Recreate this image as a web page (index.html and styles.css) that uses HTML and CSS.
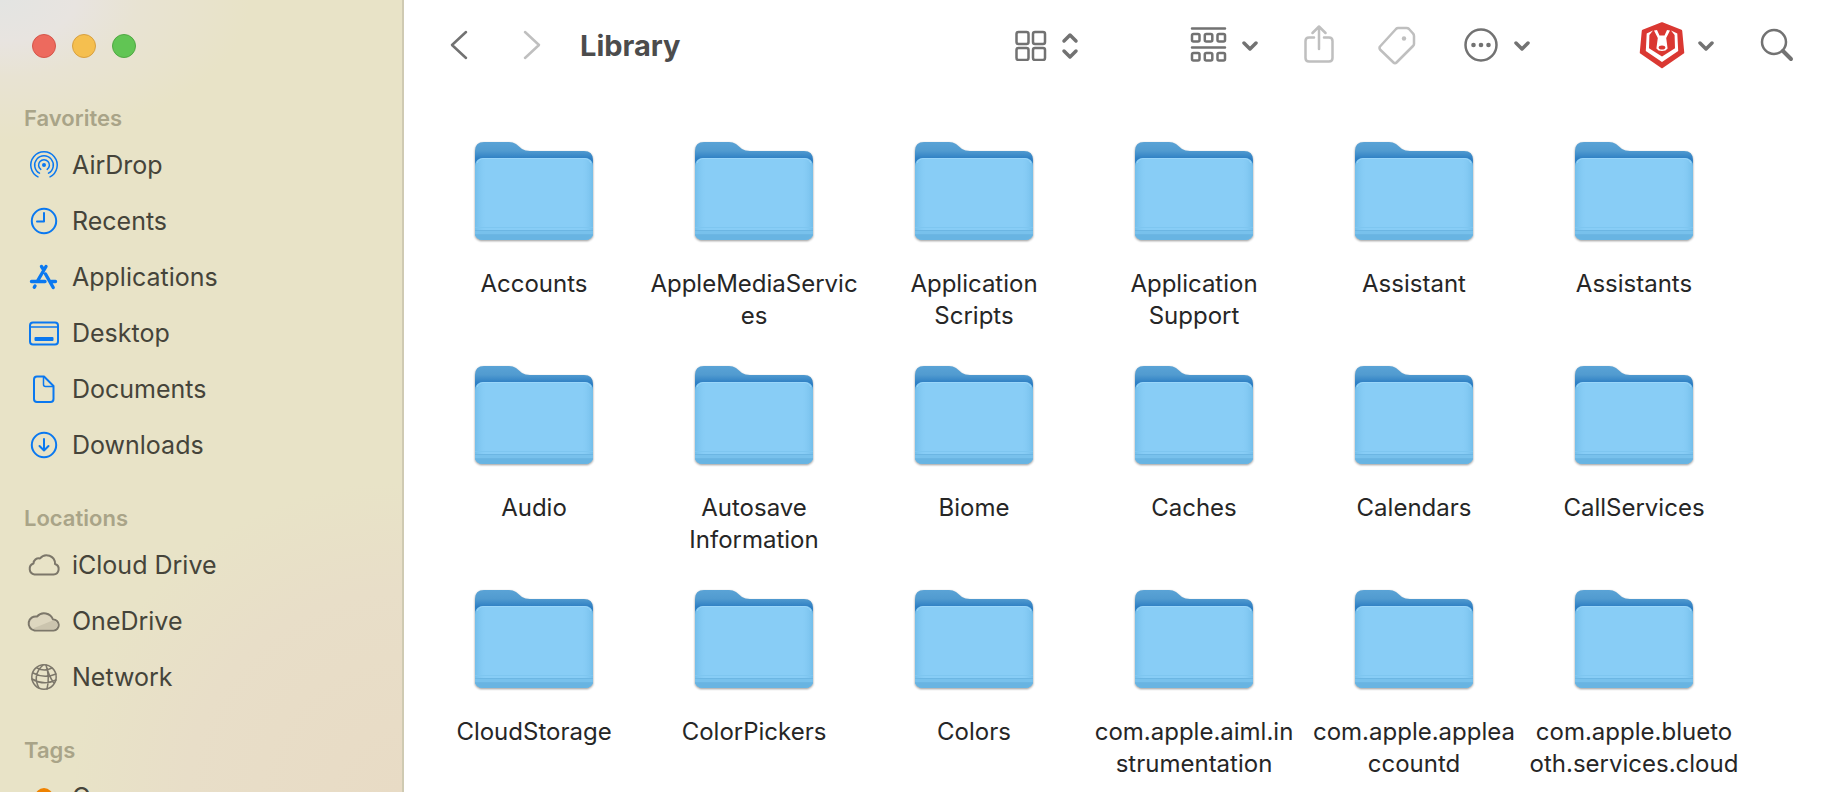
FILE: index.html
```html
<!DOCTYPE html>
<html lang="en">
<head>
    <meta charset="UTF-8">
    <meta name="viewport" content="width=device-width, initial-scale=1.0">
    <title>Library</title>
    <link rel="stylesheet" href="styles.css">
</head>
<body>
    <svg class="defs" width="0" height="0" aria-hidden="true">
        <defs>
            <linearGradient id="back" x1="0" y1="0" x2="0" y2="1">
                <stop offset="0" stop-color="#5aa3d6"/>
                <stop offset="0.09" stop-color="#519bd0"/>
                <stop offset="0.17" stop-color="#2e7fc4"/>
                <stop offset="1" stop-color="#2e7fc4"/>
            </linearGradient>
            <linearGradient id="side" x1="0" y1="0" x2="1" y2="0">
                <stop offset="0" stop-color="#6db9e6" stop-opacity="0.75"/>
                <stop offset="0.1" stop-color="#88cdf6" stop-opacity="0"/>
                <stop offset="0.9" stop-color="#88cdf6" stop-opacity="0"/>
                <stop offset="1" stop-color="#6db9e6" stop-opacity="0.75"/>
            </linearGradient>
            <symbol id="folder" viewBox="0 0 122 104">
                <path d="M2 91V11Q2 2 11 2H36Q40 2 43 4L49 9Q52 11 57 11H111Q120 11 120 20V91Q120 100 111 100H11Q2 100 2 91Z" fill="url(#back)"/>
                <path d="M2 92V27Q2 18 11 18H111Q120 18 120 27V92Q120 100 111 100H11Q2 100 2 92Z" fill="#88cdf6"/>
                <path d="M2 92V27Q2 18 11 18H111Q120 18 120 27V92Q120 100 111 100H11Q2 100 2 92Z" fill="url(#side)"/>
                <path d="M4 23Q6 18.500 11 18.500H111Q116 18.500 118 23" fill="none" stroke="#9ad6fa"/>
                <path d="M2 90H120V92Q120 100 111 100H11Q2 100 2 92Z" fill="#78c1ec"/>
                <path d="M2 95H120Q118 100 111 100H11Q4 100 2 95Z" fill="#68b4e2"/>
                <path d="M2 90.500H120M2 94.500H120" stroke="#6cb6e3" stroke-width="1"/>
                <path d="M2 87.500H120" stroke="#7ec6f0" stroke-width="1"/>
            </symbol>
        </defs>
    </svg>

    <aside class="sidebar">
        <div class="lights">
            <button class="light red" aria-label="Close"></button>
            <button class="light yellow" aria-label="Minimize"></button>
            <button class="light green" aria-label="Zoom"></button>
        </div>
        <nav>
            <h2>Favorites</h2>
            <a href="#">
                <svg class="blue airdrop" viewBox="0 0 32 32">
                    <circle cx="16" cy="16" r="2" fill="currentColor" stroke="none"/>
                    <path d="M12.800 20.400A5.400 5.400 0 1 1 19.200 20.400M11.500 24.200A9.300 9.300 0 1 1 20.500 24.200M10 27.800A13.200 13.200 0 1 1 22 27.800"/>
                </svg>
                AirDrop
            </a>
            <a href="#">
                <svg class="blue" viewBox="0 0 32 32"><circle cx="16" cy="16" r="12.200"/><path d="M16 8V16.500H9"/></svg>
                Recents
            </a>
            <a href="#">
                <svg class="blue apps" viewBox="0 0 32 32">
                    <path d="M18 5.500L9.500 20M13.500 5.500L15.500 8.500M3.500 20.500H17M23.500 20.500H27.500M17.500 13L25.200 26.500M7 25L6.300 26.300"/>
                </svg>
                Applications
            </a>
            <a href="#">
                <svg class="blue" viewBox="0 0 32 32"><rect x="2" y="5.500" width="28" height="22" rx="3"/><path d="M2 10H30" stroke-width="1.500"/><rect x="6.500" y="20" width="19" height="4" rx="1" fill="currentColor" stroke="none"/></svg>
                Desktop
            </a>
            <a href="#">
                <svg class="blue" viewBox="0 0 32 32"><path d="M9 3.500H16L25.500 13V26Q25.500 29 22.500 29H9Q6 29 6 26V6.500Q6 3.500 9 3.500Z"/><path d="M15.500 4V11.500Q15.500 13.500 17.500 13.500H25" stroke-width="1.500"/></svg>
                Documents
            </a>
            <a href="#">
                <svg class="blue" viewBox="0 0 32 32"><circle cx="16" cy="16" r="12.200"/><path d="M16 10V21.500M11.500 17L16 21.500L20.500 17"/></svg>
                Downloads
            </a>

            <h2>Locations</h2>
            <a href="#">
                <svg viewBox="0 0 32 32"><path d="M6.500 25.500H25.500A5.400 5.400 0 0 0 27 15A8.400 8.400 0 0 0 12 9.500A5.200 5.200 0 0 0 5.500 14.500A5.700 5.700 0 0 0 6.500 25.500Z"/></svg>
                iCloud Drive
            </a>
            <a href="#">
                <svg viewBox="0 0 32 32"><path d="M6.500 25.500H25.500A5.500 5.500 0 0 0 25 14.500A9.500 9.500 0 0 0 9 11.500A7 7 0 0 0 6.500 25.500Z" fill="#ddd6bf"/><path d="M5 23.500L24.500 15.500Q29.500 16 29.500 20.500Q28.500 24.500 25.500 24.500H8Z" fill="#cbc4ae" stroke="none"/></svg>
                OneDrive
            </a>
            <a href="#">
                <svg class="net" viewBox="0 0 32 32"><circle cx="16" cy="16" r="12.200"/><path d="M18 4Q22 16 19 28M15 4Q4 14 11 27M18 4Q21 16 26 22M5 12Q16 18 28 13M4 18Q16 25 28 19M9 7Q16 11 24 7"/></svg>
                Network
            </a>

            <h2>Tags</h2>
            <a href="#">
                <svg viewBox="0 0 32 32"><circle cx="16" cy="16" r="9" fill="#ef8200" stroke="none"/></svg>
                Orange
            </a>
        </nav>
    </aside>

    <main class="content">
        <header class="toolbar">
            <button class="back" aria-label="Back"><svg width="20" height="32" viewBox="0 0 20 32"><path d="M17 3L3 16L17 29"/></svg></button>
            <button class="forward dim" aria-label="Forward"><svg width="20" height="32" viewBox="0 0 20 32"><path d="M3 3L17 16L3 29"/></svg></button>
            <h1>Library</h1>
            <button class="view" aria-label="View as icons">
                <svg width="32" height="32" viewBox="0 0 32 32"><rect x="1.500" y="3" width="12" height="12" rx="2"/><rect x="18" y="3" width="12" height="12" rx="2"/><rect x="1.500" y="19" width="12" height="12" rx="2"/><rect x="18" y="19" width="12" height="12" rx="2"/></svg>
                <svg class="thick" width="18" height="32" viewBox="0 0 18 32"><path d="M3 12L9 6L15 12M3 22L9 28L15 22"/></svg>
            </button>
            <button class="group" aria-label="Group">
                <svg width="38" height="38" viewBox="0 0 38 38"><path d="M2 2.500H35M2 21.500H35"/><rect x="2" y="8" width="7.500" height="7.500" rx="1.500"/><rect x="14.800" y="8" width="7.500" height="7.500" rx="1.500"/><rect x="27.500" y="8" width="7.500" height="7.500" rx="1.500"/><rect x="2" y="27" width="7.500" height="7.500" rx="1.500"/><rect x="14.800" y="27" width="7.500" height="7.500" rx="1.500"/><rect x="27.500" y="27" width="7.500" height="7.500" rx="1.500"/></svg>
                <svg class="thick" width="18" height="12" viewBox="0 0 18 12"><path d="M3 4L9 10L15 4"/></svg>
            </button>
            <button class="share dim" aria-label="Share">
                <svg width="32" height="40" viewBox="0 0 32 40"><path d="M11 12.500H6Q2.500 12.500 2.500 16V33Q2.500 36.500 6 36.500H26Q29.500 36.500 29.500 33V16Q29.500 12.500 26 12.500H21M16 24V2M9.500 8L16 1.500L22.500 8"/></svg>
            </button>
            <button class="tag dim" aria-label="Edit tags">
                <svg width="38" height="40" viewBox="0 0 38 40"><path d="M20 3H28.500Q30 3 31 4L35 8.500Q36 9.500 36 11V19Q36 20 35 21L18.500 37.500Q17 39 15.500 37.500L2 24.500Q1 23 2 21.500L18 4Q19 3 20 3Z"/><circle cx="26" cy="13.500" r="2.200" class="dot"/></svg>
            </button>
            <button class="more" aria-label="More">
                <svg width="36" height="36" viewBox="0 0 36 36"><circle cx="18" cy="18" r="15.500"/><g class="dot"><circle cx="10.500" cy="18" r="2.300"/><circle cx="18" cy="18" r="2.300"/><circle cx="25.500" cy="18" r="2.300"/></g></svg>
                <svg class="thick" width="18" height="12" viewBox="0 0 18 12"><path d="M3 4L9 10L15 4"/></svg>
            </button>
            <button class="badger" aria-label="Badger">
                <svg width="46" height="48" viewBox="0 0 46 48">
                    <path d="M23 2.500L42 10L44 31.500L23 46L2 31.500L4 10Z" fill="#da3832" stroke="#da3832"/>
                    <path d="M14 9.500L7.700 12.500L6.800 30L23 41L39.200 30L38.300 12.500L32 9.500L35.600 14L36 27.300L23 35.500L10 27.300L10.400 14Z" class="face"/>
                    <path d="M15 9.500L18 9L20.500 14.500H25.500L28 9L31 9.500L27.200 17L28.600 27.500Q27 30 23 30Q19 30 17.400 27.500L18.800 17Z" class="face"/>
                    <ellipse cx="23" cy="26.500" rx="3.300" ry="2" fill="#da3832" stroke="none"/>
                </svg>
                <svg class="thick" width="18" height="12" viewBox="0 0 18 12"><path d="M3 4L9 10L15 4"/></svg>
            </button>
            <button class="search" aria-label="Search">
                <svg width="34" height="34" viewBox="0 0 34 34"><circle cx="14" cy="14" r="12"/><path d="M23 23L31 31" stroke-width="4"/></svg>
            </button>
        </header>

        <section class="files">
            <a href="#"><svg><use href="#folder"/></svg><span>Accounts</span></a>
            <a href="#"><svg><use href="#folder"/></svg><span>AppleMediaServic<br>es</span></a>
            <a href="#"><svg><use href="#folder"/></svg><span>Application<br>Scripts</span></a>
            <a href="#"><svg><use href="#folder"/></svg><span>Application<br>Support</span></a>
            <a href="#"><svg><use href="#folder"/></svg><span>Assistant</span></a>
            <a href="#"><svg><use href="#folder"/></svg><span>Assistants</span></a>
            <a href="#"><svg><use href="#folder"/></svg><span>Audio</span></a>
            <a href="#"><svg><use href="#folder"/></svg><span>Autosave<br>Information</span></a>
            <a href="#"><svg><use href="#folder"/></svg><span>Biome</span></a>
            <a href="#"><svg><use href="#folder"/></svg><span>Caches</span></a>
            <a href="#"><svg><use href="#folder"/></svg><span>Calendars</span></a>
            <a href="#"><svg><use href="#folder"/></svg><span>CallServices</span></a>
            <a href="#"><svg><use href="#folder"/></svg><span>CloudStorage</span></a>
            <a href="#"><svg><use href="#folder"/></svg><span>ColorPickers</span></a>
            <a href="#"><svg><use href="#folder"/></svg><span>Colors</span></a>
            <a href="#"><svg><use href="#folder"/></svg><span>com.apple.aiml.in<br>strumentation</span></a>
            <a href="#"><svg><use href="#folder"/></svg><span>com.apple.applea<br>ccountd</span></a>
            <a href="#"><svg><use href="#folder"/></svg><span>com.apple.blueto<br>oth.services.cloud</span></a>
        </section>
    </main>
</body>
</html>
```

FILE: styles.css
```css
body {
    font-family: Inter, "Liberation Sans", sans-serif;
    margin: 0;
    display: flex;
    height: 100vh;
    overflow: hidden;
    background: #ffffff;
    color: #262626;
}
a {
    color: inherit;
    text-decoration: none;
}
button {
    border: none;
    background: none;
    padding: 0;
    color: inherit;
}
.defs {
    position: absolute;
}
.sidebar {
    width: 404px;
    flex-shrink: 0;
    box-sizing: border-box;
    overflow: hidden;
    border-right: 2px solid #cfcab2;
    background:
        radial-gradient(250px 140px at 0 0, #e3e4e2 0%, #e8e4e0 30%, rgba(232, 227, 212, 0.9) 55%, rgba(232, 227, 199, 0) 100%),
        radial-gradient(330px 310px at 100% 100%, #e8dbc5 0%, #e8dec8 65%, rgba(232, 227, 199, 0) 100%),
        #e8e3c7;
}
.lights {
    display: flex;
    gap: 16px;
    padding: 34px 32px 15px;
}
.light {
    width: 24px;
    height: 24px;
    border-radius: 50%;
    border: 1px solid;
}
.red {
    background: #ed6a5e;
    border-color: #d5554a;
}
.yellow {
    background: #f5bf4f;
    border-color: #d8a040;
}
.green {
    background: #61c554;
    border-color: #50a843;
}
.sidebar h2 {
    margin: 0;
    padding: 33px 24px 7px;
    font-size: 22px;
    line-height: 24px;
    font-weight: 600;
    color: #a9a488;
}
.sidebar a {
    display: flex;
    align-items: center;
    gap: 12px;
    height: 56px;
    padding-left: 28px;
    font-size: 25px;
    color: #45443a;
}
.sidebar svg {
    width: 32px;
    height: 32px;
    overflow: visible;
    fill: none;
    stroke: currentColor;
    stroke-width: 2;
    stroke-linecap: round;
    stroke-linejoin: round;
    color: #7c776a;
}
.sidebar .blue {
    color: #0a78f0;
}
.sidebar .apps {
    stroke-width: 3.4;
}
.sidebar .net,
.sidebar .airdrop {
    stroke-width: 1.5;
}
.content {
    flex: 1;
}
.toolbar {
    display: flex;
    align-items: center;
    height: 90px;
    padding: 0 30px 0 45px;
    color: #727272;
}
.toolbar button {
    display: flex;
    align-items: center;
}
.toolbar svg {
    fill: none;
    stroke: currentColor;
    stroke-width: 2.5;
    stroke-linecap: round;
    stroke-linejoin: round;
}
.toolbar .thick {
    stroke-width: 3.5;
}
.toolbar .dot {
    fill: currentColor;
    stroke: none;
}
.toolbar .face {
    fill: #ffffff;
    stroke: none;
}
.toolbar .dim {
    color: #bfbfbf;
}
.toolbar h1 {
    flex: 1;
    margin: 0 0 0 38px;
    font-size: 29px;
    font-weight: 700;
    color: #4c4c4c;
}
.forward {
    margin-left: 53px;
}
.view {
    gap: 14px;
}
.group {
    gap: 13px;
    margin-left: 111px;
}
.share {
    margin-left: 44px;
}
.tag {
    margin-left: 43px;
}
.more {
    gap: 14px;
    margin-left: 47px;
}
.badger {
    gap: 12px;
    margin-left: 108px;
}
.search {
    margin-left: 45px;
}
.files {
    display: grid;
    grid-template-columns: repeat(auto-fill, 220px);
    grid-auto-rows: 224px;
    padding: 50px 0 0 20px;
}
.files a {
    display: flex;
    flex-direction: column;
    align-items: center;
    gap: 24px;
    font-size: 24px;
    line-height: 32px;
    text-align: center;
}
.files svg {
    width: 122px;
    height: 104px;
    flex-shrink: 0;
    filter: drop-shadow(0 1px 1px rgba(0, 0, 0, 0.4));
}
```
